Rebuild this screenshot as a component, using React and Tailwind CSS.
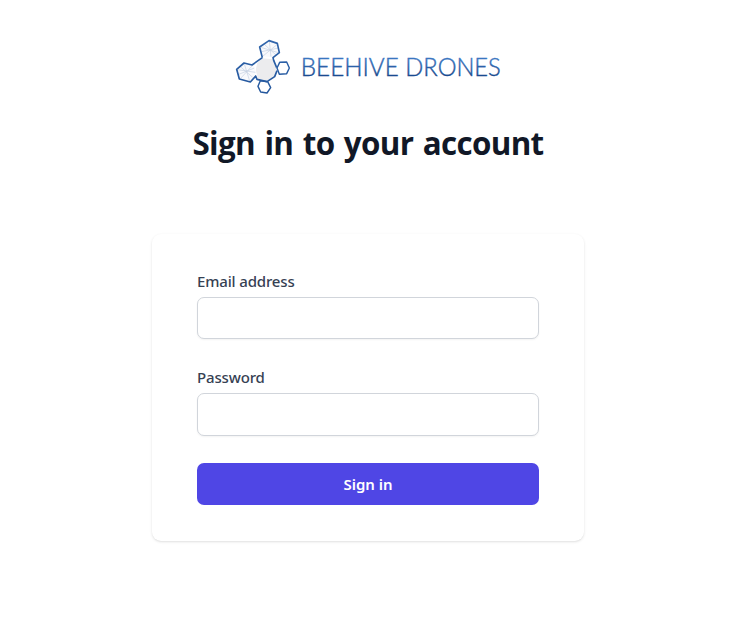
function Emblem() {
  return (
    <svg className="h-16 w-[66px] shrink-0" viewBox="0 0 198 192" fill="none" strokeLinejoin="round" aria-hidden="true">
      <defs>
        <linearGradient id="edge" x1="0" y1="0" x2="0" y2="192" gradientUnits="userSpaceOnUse">
          <stop offset="0" stopColor="#3166ad" />
          <stop offset="1" stopColor="#22559b" />
        </linearGradient>
      </defs>
      <path d="M97 70 L128 73 L139 101 L133 125 L110 137 L84 131 L77 105 L82 85 Z" fill="#ececee" />
      <path d="M90 36 L117 17 L143 27 L147 53 L128 67 L97 64 Z M20 103 L43 84 L69 90 L78 112 L61 140 L29 132 Z" fill="#f8f9fc" />
      <g stroke="#c3cee1" strokeWidth="2">
        <path d="M92 37 L145 53 M118 18 L123 65 M142 28 L99 63 M103 28 L138 60 M95 50 L145 39" />
        <path d="M22 104 L76 112 M43 87 L59 138 M68 91 L31 131 M31 95 L68 127 M24 119 L73 99" />
      </g>
      <g stroke="url(#edge)" strokeWidth="5">
        <path d="M97 68 L89 36 L117 17 L142 25 L148 53 L129 68 L131 76 L140 98 M97 68 L66 90 L42 84 L20 103 L28 132 L61 141 L77 123 L81 133 L111 140 L134 125 L141 107" />
        <path d="M141 99 L149 82 L170 81 L178 99 L170 116 L148 118 Z" strokeWidth="4.3" />
        <path d="M91 137 L84 154 L92 171 L111 174 L122 158 L113 140 Z" strokeWidth="4.3" />
      </g>
    </svg>
  );
}

function Logo() {
  return (
    <div className="ml-[230px] flex h-16 items-center">
      <Emblem />
      <svg className="h-8 w-[210px]" viewBox="0 0 210 32" role="img" aria-label="Beehive Drones">
        <defs>
          <linearGradient id="brand" x1="0" y1="7" x2="0" y2="25" gradientUnits="userSpaceOnUse">
            <stop offset="0" stopColor="#3b77c2" />
            <stop offset="1" stopColor="#194a8e" />
          </linearGradient>
        </defs>
        <g fontSize="25" fill="url(#brand)" stroke="url(#brand)" strokeWidth="0.4" className="font-['Lato',sans-serif] font-light">
          <text x="4.8" y="25.3" textLength="98" lengthAdjust="spacingAndGlyphs">BEEHIVE</text>
          <text x="109.3" y="25.3" textLength="95.5" lengthAdjust="spacingAndGlyphs">DRONES</text>
        </g>
      </svg>
    </div>
  );
}

function Field({ id, label, type, className, inputClass }) {
  return (
    <div className={className}>
      <label htmlFor={id} className="block h-6 text-[15px] leading-6 font-medium tracking-[-0.15px] text-gray-700">
        {label}
      </label>
      <input id={id} type={type} className={`mt-1 block w-full rounded-[7px] border border-[#d1d5db] bg-white px-3 shadow-xs outline-none ${inputClass}`} />
    </div>
  );
}

export default function App() {
  return (
    <main className="h-[627px] w-[736px] overflow-hidden bg-white pt-[35px] font-['Noto_Sans',sans-serif]">
      <Logo />
      <h1 className="mt-6 origin-center scale-x-[0.95] text-center font-['Open_Sans',sans-serif] text-[33px] leading-10 font-bold tracking-[-0.68px] [word-spacing:2px] whitespace-nowrap text-[#111827]">
        Sign in to your account
      </h1>
      <form className="mx-auto mt-[71px] h-[307px] w-[432px] rounded-[9px] bg-white px-[45px] pt-[35px] shadow-sm" onSubmit={(e) => e.preventDefault()}>
        <Field id="email" label="Email address" type="email" inputClass="h-[42px]" />
        <Field id="password" label="Password" type="password" className="mt-[26px]" inputClass="h-[43px]" />
        <button type="submit" className="mt-[27px] h-[42px] w-full rounded-[7px] bg-[#4f46e5] text-[15px] font-semibold text-white">
          Sign in
        </button>
      </form>
    </main>
  );
}
